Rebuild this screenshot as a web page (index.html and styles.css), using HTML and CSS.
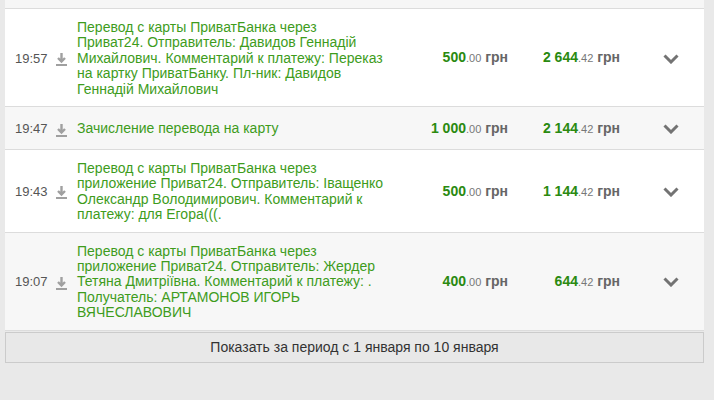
FILE: index.html
```html
<!DOCTYPE html>
<html lang="ru">
<head>
    <meta charset="UTF-8">
    <title>Выписка по карте</title>
    <link rel="stylesheet" href="styles.css">
</head>
<body>
    <div class="statement">
        <div class="row-stub"></div>

        <div class="row">
            <span class="time">19:57</span>
            <span class="icon">
                <svg width="11" height="14" viewBox="0 0 11 14"><path d="M5.5 1v8M2 6l3.5 3.5L9 6" fill="none" stroke="#a0a0a0" stroke-width="2.4"/><rect x="0" y="12" width="11" height="2" fill="#a0a0a0"/></svg>
            </span>
            <span class="desc">Перевод с карты ПриватБанка через<br>Приват24. Отправитель: Давидов Геннадій<br>Михайлович. Комментарий к платежу: Переказ<br>на картку ПриватБанку. Пл-ник: Давидов<br>Геннадій Михайлович</span>
            <span class="sum"><b>500</b><small>.00</small> <em>грн</em></span>
            <span class="sum balance"><b>2 644</b><small>.42</small> <em>грн</em></span>
            <span class="toggle"><svg width="16" height="10" viewBox="0 0 16 10"><path d="M1.5 1.5L8 8l6.5-6.5" fill="none" stroke="#737373" stroke-width="3"/></svg></span>
        </div>

        <div class="row">
            <span class="time">19:47</span>
            <span class="icon">
                <svg width="11" height="14" viewBox="0 0 11 14"><path d="M5.5 1v8M2 6l3.5 3.5L9 6" fill="none" stroke="#a0a0a0" stroke-width="2.4"/><rect x="0" y="12" width="11" height="2" fill="#a0a0a0"/></svg>
            </span>
            <span class="desc">Зачисление перевода на карту</span>
            <span class="sum"><b>1 000</b><small>.00</small> <em>грн</em></span>
            <span class="sum balance"><b>2 144</b><small>.42</small> <em>грн</em></span>
            <span class="toggle"><svg width="16" height="10" viewBox="0 0 16 10"><path d="M1.5 1.5L8 8l6.5-6.5" fill="none" stroke="#737373" stroke-width="3"/></svg></span>
        </div>

        <div class="row">
            <span class="time">19:43</span>
            <span class="icon">
                <svg width="11" height="14" viewBox="0 0 11 14"><path d="M5.5 1v8M2 6l3.5 3.5L9 6" fill="none" stroke="#a0a0a0" stroke-width="2.4"/><rect x="0" y="12" width="11" height="2" fill="#a0a0a0"/></svg>
            </span>
            <span class="desc">Перевод с карты ПриватБанка через<br>приложение Приват24. Отправитель: Іващенко<br>Олександр Володимирович. Комментарий к<br>платежу: для Егора(((.</span>
            <span class="sum"><b>500</b><small>.00</small> <em>грн</em></span>
            <span class="sum balance"><b>1 144</b><small>.42</small> <em>грн</em></span>
            <span class="toggle"><svg width="16" height="10" viewBox="0 0 16 10"><path d="M1.5 1.5L8 8l6.5-6.5" fill="none" stroke="#737373" stroke-width="3"/></svg></span>
        </div>

        <div class="row">
            <span class="time">19:07</span>
            <span class="icon">
                <svg width="11" height="14" viewBox="0 0 11 14"><path d="M5.5 1v8M2 6l3.5 3.5L9 6" fill="none" stroke="#a0a0a0" stroke-width="2.4"/><rect x="0" y="12" width="11" height="2" fill="#a0a0a0"/></svg>
            </span>
            <span class="desc">Перевод с карты ПриватБанка через<br>приложение Приват24. Отправитель: Жердер<br>Тетяна Дмитріївна. Комментарий к платежу: .<br>Получатель: АРТАМОНОВ ИГОРЬ<br>ВЯЧЕСЛАВОВИЧ</span>
            <span class="sum"><b>400</b><small>.00</small> <em>грн</em></span>
            <span class="sum balance"><b>644</b><small>.42</small> <em>грн</em></span>
            <span class="toggle"><svg width="16" height="10" viewBox="0 0 16 10"><path d="M1.5 1.5L8 8l6.5-6.5" fill="none" stroke="#737373" stroke-width="3"/></svg></span>
        </div>
    </div>

    <button class="more">Показать за период с 1 января по 10 января</button>
</body>
</html>
```

FILE: styles.css
```css
body {
    margin: 0;
    padding: 0 10px 0 5px;
    background: #e9e9e9;
    font-family: "Liberation Sans", Arial, sans-serif;
    font-size: 14px;
    color: #333;
}

.statement {
    background: #fff;
}

.row-stub {
    height: 8px;
    background: #f6f6f6;
    border-bottom: 1px solid #dcdcdc;
}

.row {
    display: flex;
    align-items: center;
    padding: 11px 0 9px;
    border-bottom: 1px solid #dcdcdc;
    line-height: 15.4px;
}

.row:nth-child(odd) {
    background: #f7f7f7;
}

.time {
    width: 40px;
    padding-left: 10px;
    font-size: 13px;
    color: #555;
}

.icon {
    width: 22px;
    display: flex;
}

.icon svg {
    display: block;
    margin: 1px 0 0 1px;
}

.desc {
    width: 322px;
    white-space: nowrap;
    color: #3e9c1c;
}

.sum {
    width: 109px;
    text-align: right;
    white-space: nowrap;
}

.sum.balance {
    width: 112px;
}

.sum b {
    color: #2a8a10;
}

.sum small {
    font-size: 11px;
    color: #777;
}

.sum em {
    font-style: normal;
    font-weight: bold;
    color: #666;
}

.toggle {
    height: 22px;
    padding-left: 43px;
    display: flex;
    align-items: center;
}

.toggle svg {
    display: block;
}

.more {
    display: block;
    width: 100%;
    height: 31px;
    margin-top: 1px;
    background: #e8e8e8;
    border: 1px solid #cbcbcb;
    font-family: inherit;
    font-size: 14px;
    color: #333;
    cursor: pointer;
}
```
